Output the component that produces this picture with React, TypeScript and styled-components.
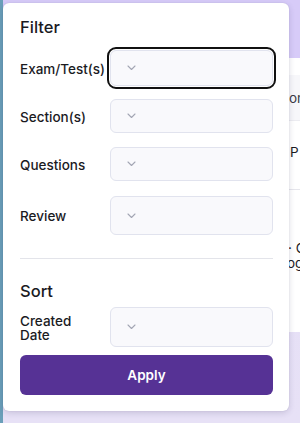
import React from 'react';
import styled, { createGlobalStyle } from 'styled-components';

const GlobalStyle = createGlobalStyle`
  html, body {
    margin: 0;
    padding: 0;
  }
  body {
    font-family: Inter, "Noto Sans", sans-serif;
    color: #1b1b1f;
    background: #e6e0f6;
    overflow: hidden;
  }
`;

const Page = styled.div`
  position: relative;
  width: 300px;
  height: 423px;
  display: grid;
  grid-template-columns: 3px 1fr;
  overflow: hidden;
`;

const SideStrip = styled.div`
  background: #6a9fb9;
`;

const Main = styled.div`
  display: flex;
  flex-direction: column;
  background: linear-gradient(180deg, #e4ddf7 0%, #e7e1f6 100%);
`;

const TopBar = styled.div`
  height: 58px;
  background: #d7cbf8;
  flex-shrink: 0;
`;

const TableCard = styled.div`
  margin-left: 270px;
  width: 200px;
  height: 274px;
  background: #fff;
  display: flex;
  flex-direction: column;
  font-size: 13.5px;
  color: #1b1b1f;
`;

const CardGap = styled.div`
  height: 17px;
`;

const HeadRow = styled.div`
  height: 45px;
  background: #f7f7fa;
  border-bottom: 1px solid #ececf1;
  display: flex;
  align-items: center;
  padding-left: 16px;
  color: #3b3b45;
`;

const BodyRow = styled.div<{ $h: number; $pt: number; $line?: boolean }>`
  height: ${(p) => p.$h}px;
  box-sizing: border-box;
  border-bottom: ${(p) => (p.$line ? '1px solid #e6e6ec' : 'none')};
  display: flex;
  flex-direction: column;
  padding: ${(p) => p.$pt}px 0 0 17px;
  line-height: 15px;
`;

const Panel = styled.div`
  position: absolute;
  left: 3px;
  top: 3px;
  width: 286px;
  height: 408px;
  box-sizing: border-box;
  background: #fff;
  border-radius: 6px;
  box-shadow: 0 2px 6px rgba(40, 30, 80, 0.16), 0 0 1px rgba(40, 30, 80, 0.2);
  padding: 14px 16px 15px 17px;
  display: flex;
  flex-direction: column;
`;

const Heading = styled.div<{ $mt?: number }>`
  font-size: 16.5px;
  font-weight: 500;
  line-height: 20px;
  margin-top: ${(p) => p.$mt ?? 0}px;
`;

const Row = styled.div<{ $mt: number }>`
  display: grid;
  grid-template-columns: 80px 1fr;
  column-gap: 10px;
  align-items: center;
  margin-top: ${(p) => p.$mt}px;
`;

const Label = styled.div`
  font-size: 13.5px;
  font-weight: 500;
  line-height: 13.5px;
  padding-top: 3px;
  white-space: normal;
`;

const Select = styled.button<{ $h: number; $focused?: boolean }>`
  height: ${(p) => p.$h}px;
  box-sizing: border-box;
  width: 163px;
  background: #f9f9fc;
  border: 1px solid #e1e3ee;
  border-radius: 6px;
  display: flex;
  align-items: center;
  padding: 0 0 0 16px;
  cursor: pointer;
  outline: ${(p) => (p.$focused ? '2px solid #111' : 'none')};
  outline-offset: 1px;
`;

const Divider = styled.div`
  height: 1px;
  background: #e3e4ea;
  margin-top: 23px;
  width: 253px;
`;

const ApplyButton = styled.button`
  margin-top: 8px;
  width: 253px;
  height: 40px;
  border: none;
  border-radius: 6px;
  background: #563295;
  color: #fff;
  font-family: Inter, "Noto Sans", sans-serif;
  font-size: 13.5px;
  font-weight: 600;
  cursor: pointer;
`;

const Chevron = () => (
  <svg width="9" height="6" viewBox="0 0 9 6" fill="none">
    <path d="M1 1l3.5 3.5L8 1" stroke="#a3a6b4" strokeWidth="1.1" strokeLinecap="round" strokeLinejoin="round" />
  </svg>
);

const filters = [
  { label: 'Exam/Test(s)', h: 36, mt: 13, focused: true },
  { label: 'Section(s)', h: 34, mt: 13 },
  { label: 'Questions', h: 34, mt: 14 },
  { label: 'Review', h: 39, mt: 15 },
];

export default function App() {
  return (
    <>
      <GlobalStyle />
      <Page>
        <SideStrip />
        <Main>
          <TopBar />
          <TableCard>
            <CardGap />
            <HeadRow>on</HeadRow>
            <BodyRow $h={69} $pt={24} $line>
              <span>P</span>
            </BodyRow>
            <BodyRow $h={130} $pt={51}>
              <span style={{ marginLeft: -2 }}>· C</span>
              <span style={{ marginLeft: -3 }}>og</span>
            </BodyRow>
          </TableCard>
        </Main>
        <Panel>
          <Heading>Filter</Heading>
          {filters.map((f) => (
            <Row key={f.label} $mt={f.mt}>
              <Label>{f.label}</Label>
              <Select $h={f.h} $focused={f.focused}>
                <Chevron />
              </Select>
            </Row>
          ))}
          <Divider />
          <Heading $mt={22}>Sort</Heading>
          <Row $mt={6}>
            <Label>Created Date</Label>
            <Select $h={40}>
              <Chevron />
            </Select>
          </Row>
          <ApplyButton>Apply</ApplyButton>
        </Panel>
      </Page>
    </>
  );
}
